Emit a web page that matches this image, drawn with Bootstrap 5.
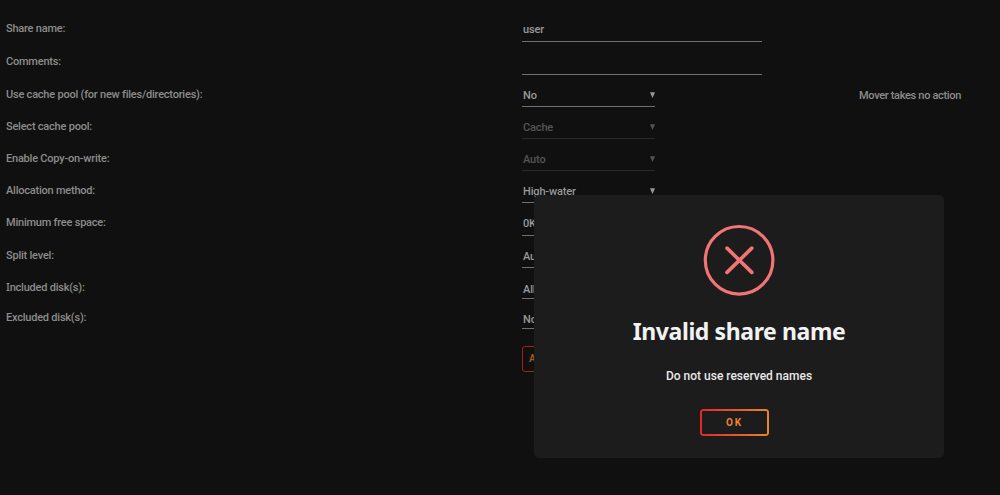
<!DOCTYPE html>
<html lang="en" data-bs-theme="dark">
<head>
<meta charset="utf-8">
<meta name="viewport" content="width=device-width, initial-scale=1">
<title>Share settings</title>
<link href="https://cdn.jsdelivr.net/npm/bootstrap@5.3.0/dist/css/bootstrap.min.css" rel="stylesheet">
<style>
  body { background: #101010; color: #8c8c8c; font: 500 11px/14px Roboto, "Liberation Sans", sans-serif; height: 495px; }
  .share-form { padding: 9px 6px 0; }
  .share-row { height: 32px; }
  .share-row.tall { height: 33px; }
  .share-row.short { height: 31px; }
  .share-row.shorter { height: 30px; }
  .share-label { width: 516px; padding-bottom: 5px; letter-spacing: -.22px; white-space: nowrap; }
  .tall .share-label { padding-bottom: 6px; }
  .short .share-label, .shorter .share-label { padding-bottom: 4px; }
  .serif-cap { font-family: "Noto Sans", sans-serif; }
  .field { width: 133px; height: 20px; border-bottom: 1px solid #707070; padding-bottom: 3px; padding-left: 1px; letter-spacing: -.15px; color: #999; }
  .tall .field { padding-bottom: 4px; }
  .field.wide { width: 240px; }
  .field.off { color: #555; border-color: #292929; }
  .field.low { padding-bottom: 1px; }
  .caret { width: 5px; height: 6px; margin-bottom: 5px; fill: currentColor; }
  .share-note { margin-left: 204px; padding-bottom: 4px; letter-spacing: -.32px; white-space: nowrap; }
  .btn-edge { --bs-btn-padding-x: 0; --bs-btn-padding-y: 0; --bs-btn-border-width: 0; position: relative; font-size: 10px; font-weight: 700; line-height: 14px; color: #f08030; border-radius: 3px; letter-spacing: 1.8px; }
  .btn-edge::before { content: ""; position: absolute; inset: 0; padding: 2px; border-radius: 3px; background: linear-gradient(90deg, #e22828, #e8842f); -webkit-mask: linear-gradient(#000 0 0) content-box, linear-gradient(#000 0 0); -webkit-mask-composite: xor; mask-composite: exclude; }
  .btn-apply { width: 76px; height: 26px; margin: 17px 0 0 516px; padding-left: 7px; color: #a4571c; }
  .btn-apply::before { padding: 1px; background: linear-gradient(90deg, #a31d1d, #a85f20); }
  .btn-ok { width: 69px; height: 27px; margin: 25px 9px 0 0; }
  .alert-dialog { position: absolute; left: 534px; top: 195px; width: 410px; height: 263px; border-radius: 5px; background: #1c1c1c; color: #e8e8e8; padding-top: 29px; }
  .alert-icon { width: 72px; height: 72px; }
  .alert-title { margin: 19px 0 0; font: 700 23px/32px "Noto Sans", sans-serif; color: #f2f2f2; letter-spacing: -.4px; }
  .alert-text { margin: 21px 0 0; font-size: 12px; line-height: 16px; font-weight: 500; }
</style>
</head>
<body class="position-relative overflow-hidden">
<svg class="d-none"><symbol id="caret" viewBox="0 0 5 6"><path d="M0 .3h5L2.5 6z"/></symbol></svg>
<form class="share-form">
  <div class="share-row tall d-flex align-items-end"><label class="share-label">Share name:</label><div class="field wide d-flex align-items-end">user</div></div>
  <div class="share-row tall d-flex align-items-end"><label class="share-label">Comments:</label><div class="field wide"></div></div>
  <div class="share-row d-flex align-items-end"><label class="share-label">Use cache pool (for new files/directories):</label><div class="field d-flex align-items-end justify-content-between">No<svg class="caret"><use href="#caret"/></svg></div><div class="share-note">Mover takes no action</div></div>
  <div class="share-row d-flex align-items-end"><label class="share-label">Select cache pool:</label><div class="field off d-flex align-items-end justify-content-between">Cache<svg class="caret"><use href="#caret"/></svg></div></div>
  <div class="share-row d-flex align-items-end"><label class="share-label">Enable Copy-on-write:</label><div class="field off d-flex align-items-end justify-content-between">Auto<svg class="caret"><use href="#caret"/></svg></div></div>
  <div class="share-row d-flex align-items-end"><label class="share-label">Allocation method:</label><div class="field d-flex align-items-end justify-content-between">High-water<svg class="caret"><use href="#caret"/></svg></div></div>
  <div class="share-row tall d-flex align-items-end"><label class="share-label">Minimum free space:</label><div class="field d-flex align-items-end">0KB</div></div>
  <div class="share-row d-flex align-items-end"><label class="share-label">Split level:</label><div class="field d-flex align-items-end">Auto</div></div>
  <div class="share-row short d-flex align-items-end"><label class="share-label"><span class="serif-cap">I</span>ncluded disk(s):</label><div class="field low d-flex align-items-end">All</div></div>
  <div class="share-row shorter d-flex align-items-end"><label class="share-label">Excluded disk(s):</label><div class="field low d-flex align-items-end">None</div></div>
  <button type="button" class="btn btn-edge btn-apply d-block text-start">APPLY</button>
</form>
<div class="alert-dialog d-flex flex-column align-items-center text-center" role="alertdialog">
  <svg class="alert-icon flex-shrink-0" viewBox="0 0 72 72" fill="none" stroke="#f27474" stroke-width="3.2"><circle cx="36.1" cy="36.3" r="33.8"/><path d="M24 24.1 48.8 48.4M48.8 24.1 24 48.4" stroke-width="3.6" stroke-linecap="round"/></svg>
  <h2 class="alert-title">Invalid share name</h2>
  <p class="alert-text">Do not use reserved names</p>
  <button type="button" class="btn btn-edge btn-ok">OK</button>
</div>
<script src="https://cdn.jsdelivr.net/npm/bootstrap@5.3.0/dist/js/bootstrap.bundle.min.js"></script>
</body>
</html>
